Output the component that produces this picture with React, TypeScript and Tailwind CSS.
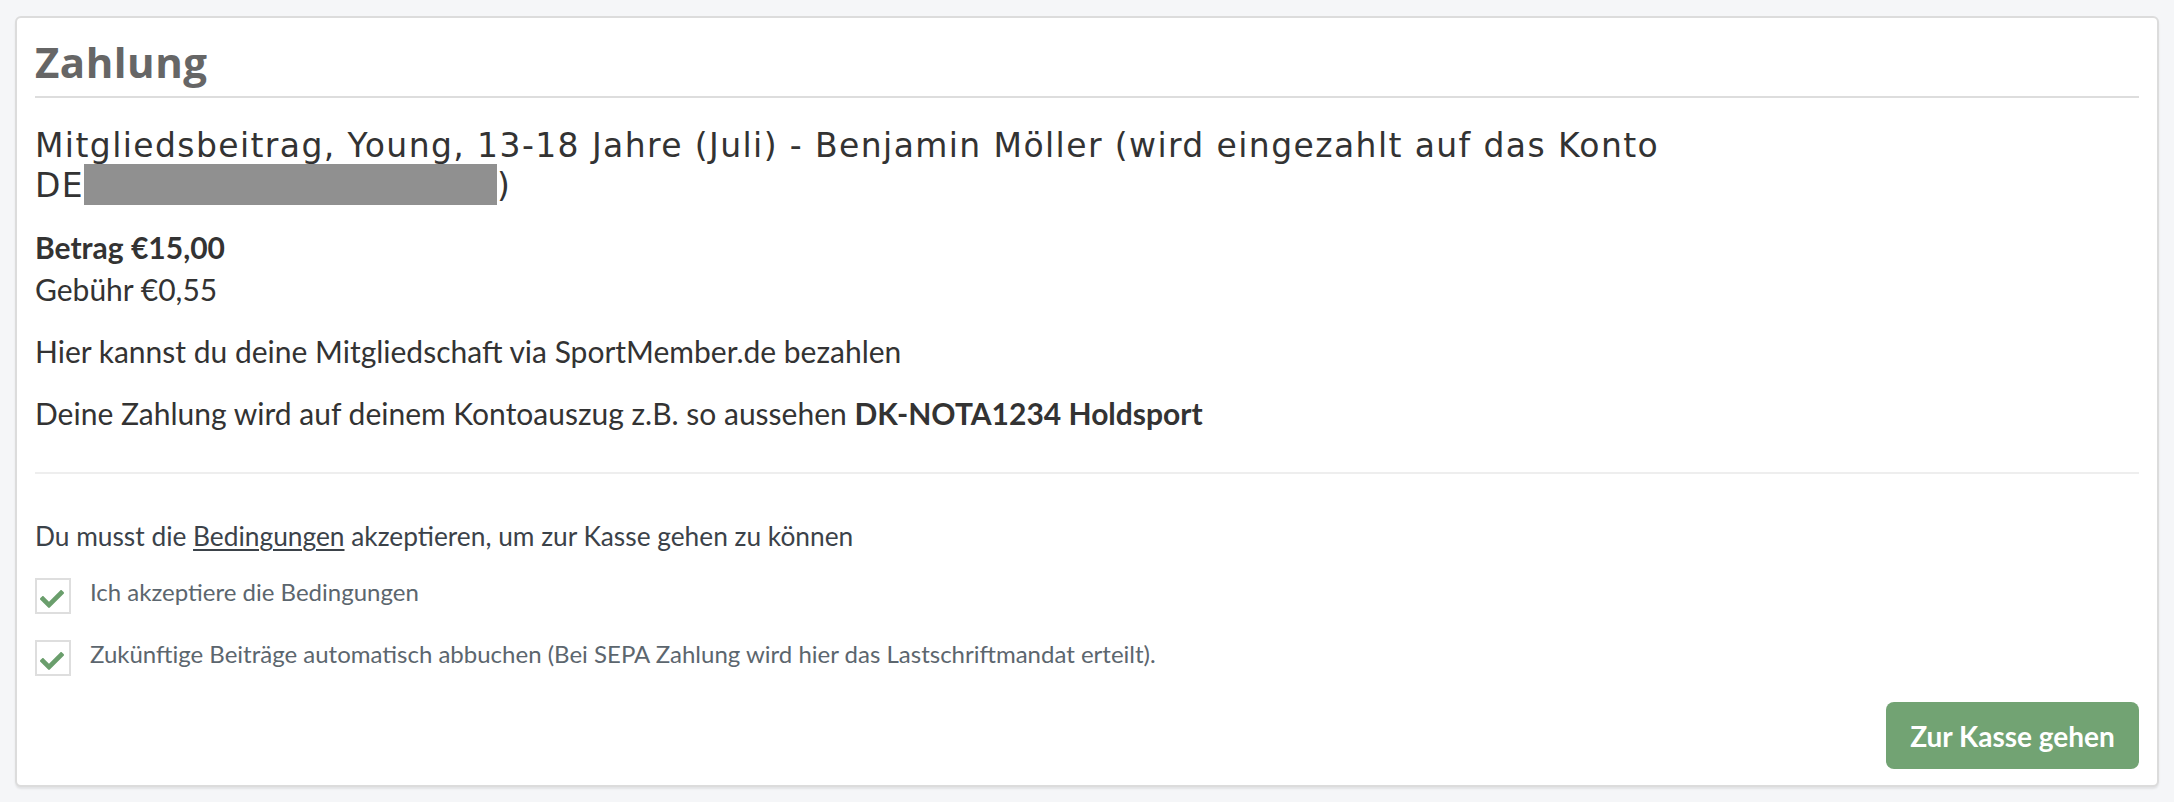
const CheckBox = () => (
  <span className="flex h-[36px] w-[36px] shrink-0 items-center justify-center border-2 border-[#dedede] bg-white">
    <svg viewBox="0 0 512 512" className="mt-[5px] ml-[-3px] h-[24px] w-[24px]" fill="#6a9e6c">
      <path d="M173.9 439.4 7.5 273c-10-10-10-26.2 0-36.2l36.2-36.2c10-10 26.2-10 36.2 0L192 312.7 432.1 72.6c10-10 26.2-10 36.2 0l36.2 36.2c10 10 10 26.2 0 36.2L210.1 439.4c-10 10-26.2 10-36.2 0z" />
    </svg>
  </span>
);

export default function App() {
  return (
    <div className="min-h-screen bg-[#f5f6f8] px-[15px] pt-[16px] pb-[15px] font-['Lato',sans-serif]">
      <div className="rounded-[6px] border-2 border-[#dcdcdc] bg-white px-[18px] pb-[16px] shadow-[0_2px_2px_rgba(0,0,0,0.08)]">
        <h2 className="pt-[21px] font-['Open_Sans',sans-serif] text-[42px] leading-[46px] font-bold tracking-[0.5px] text-[#666]">
          Zahlung
        </h2>
        <div className="mt-[11px] border-b-2 border-[#dddddd]" />

        <p className="mt-[28px] font-['DejaVu_Sans',sans-serif] text-[33px] leading-[40px] tracking-[1.4px] text-[#333]">
          Mitgliedsbeitrag, Young, 13-18 Jahre (Juli) - Benjamin Möller (wird eingezahlt auf das Konto
          <br />
          <span className="whitespace-nowrap">
            DE
            {/* geschwärzte IBAN */}
            <span className="relative inline-block w-[413px] align-baseline">
              <span className="absolute top-[-33px] left-0 h-[41px] w-full bg-[#909090]" />
            </span>
            )
          </span>
        </p>

        <div className="mt-[20px] text-[30px] leading-[42px] text-[#333]">
          <div className="font-bold">Betrag €15,00</div>
          <div>Gebühr €0,55</div>
          <p className="mt-[20px]">Hier kannst du deine Mitgliedschaft via SportMember.de bezahlen</p>
          <p className="mt-[20px]">
            Deine Zahlung wird auf deinem Kontoauszug z.B. so aussehen <b>DK-NOTA1234 Holdsport</b>
          </p>
        </div>

        <div className="mt-[38px] border-b-2 border-[#eeeeee]" />

        <p className="mt-[45px] text-[26.3px] leading-[34px] text-[#3b4249]">
          Du musst die <a className="underline underline-offset-[3px]">Bedingungen</a> akzeptieren, um zur Kasse gehen zu
          können
        </p>

        <label className="mt-[25px] flex items-center gap-[19px]">
          <CheckBox />
          <span className="mt-[-9px] text-[24px] leading-[32px] text-[#5c666e]">Ich akzeptiere die Bedingungen</span>
        </label>
        <label className="mt-[26px] flex items-center gap-[19px]">
          <CheckBox />
          <span className="mt-[-9px] text-[24px] leading-[32px] text-[#5c666e]">
            Zukünftige Beiträge automatisch abbuchen (Bei SEPA Zahlung wird hier das Lastschriftmandat erteilt).
          </span>
        </label>

        <div className="mt-[26px] flex justify-end">
          <button className="h-[67px] w-[253px] rounded-[8px] bg-[#72a373] text-[28px] font-bold text-white">
            Zur Kasse gehen
          </button>
        </div>
      </div>
    </div>
  );
}
